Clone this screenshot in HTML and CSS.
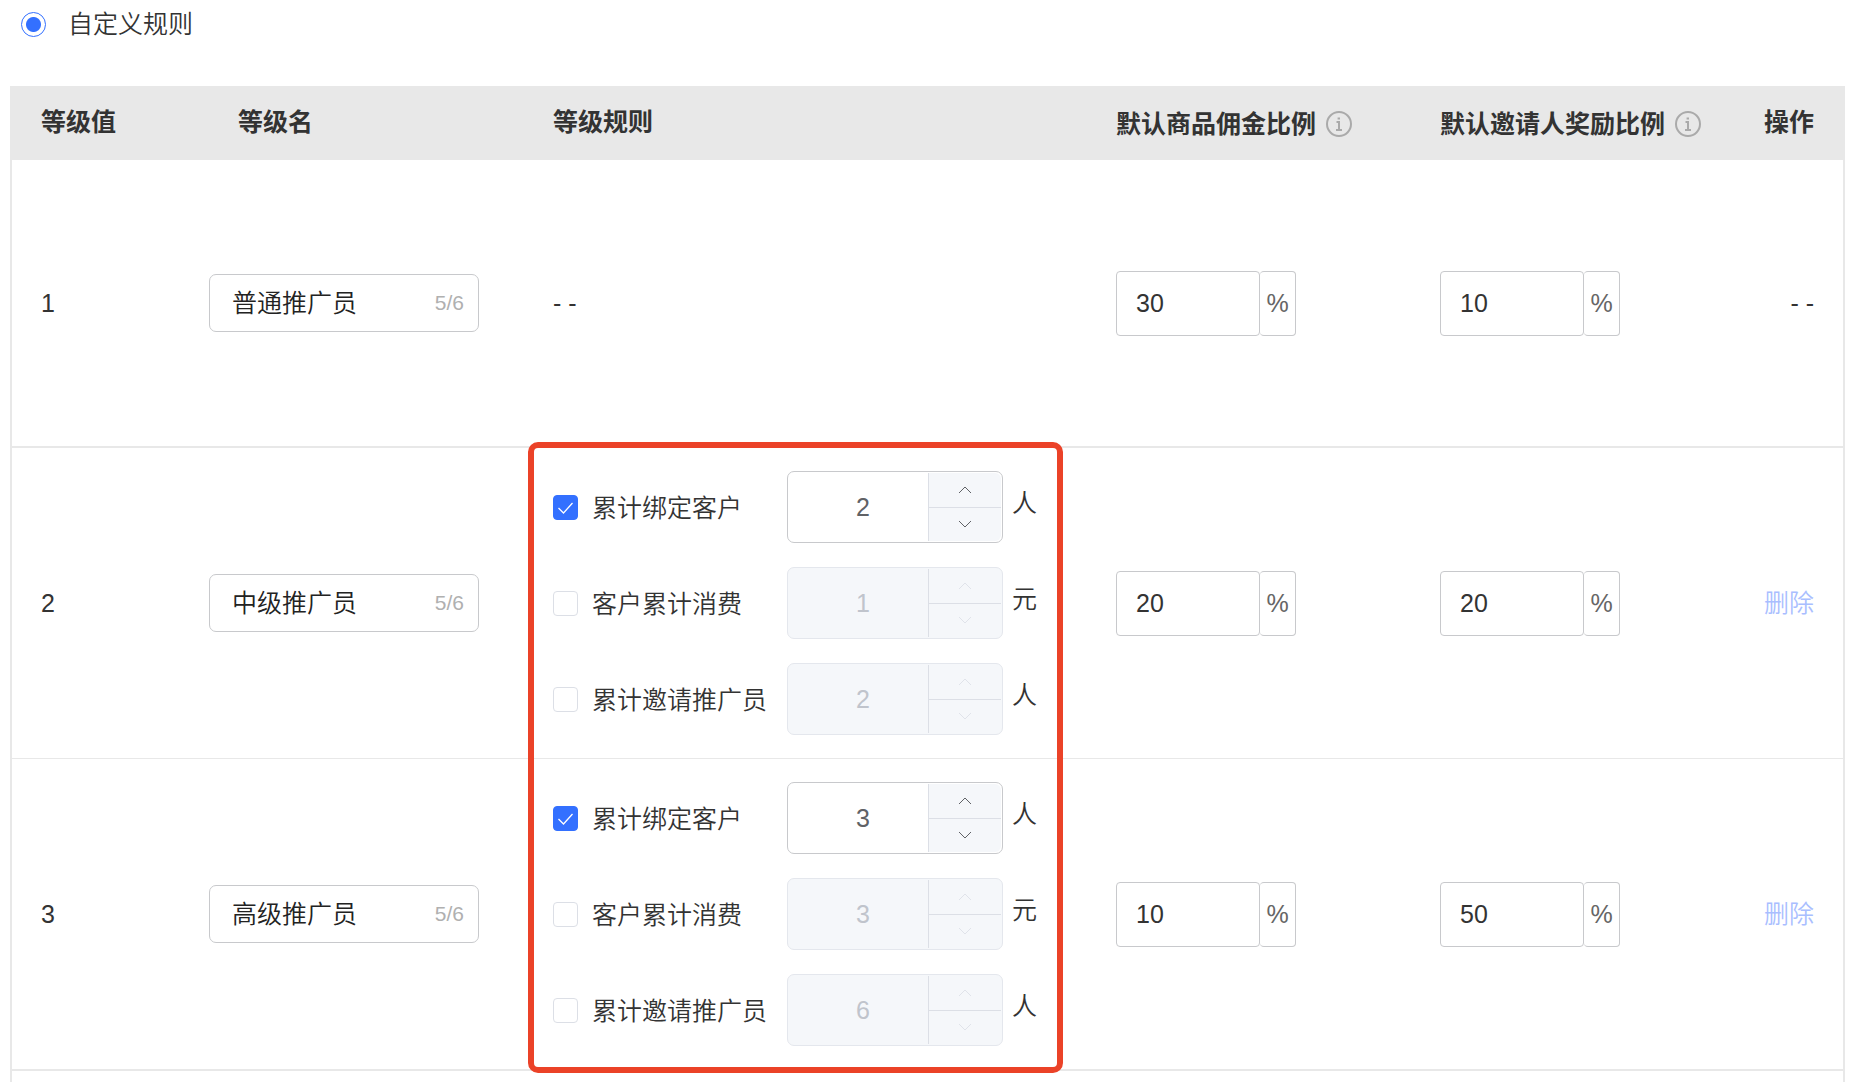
FILE: index.html
```html
<!DOCTYPE html>
<html lang="zh-CN">
<head>
<meta charset="utf-8">
<title>自定义规则</title>
<link rel="stylesheet" href="styles.css">
</head>
<body>
<svg class="sprite" aria-hidden="true">
  <symbol id="up" viewBox="0 0 14 8"><path d="M1 7 7 1l6 6"/></symbol>
  <symbol id="down" viewBox="0 0 14 8"><path d="m1 1 6 6 6-6"/></symbol>
  <symbol id="info" viewBox="0 0 26 26"><circle cx="13" cy="13" r="12"/><path d="M10.500 11h2.500v8M10 19h6"/><path d="M12.800 6.500v2" stroke-width="2.400"/></symbol>
</svg>
<label class="mode"><input class="radio" type="radio" name="mode" checked><span>自定义规则</span></label>

<main class="levels">
<table>
  <colgroup><col class="col-level"><col class="col-name"><col><col class="col-rate"><col class="col-rate"><col class="col-op"></colgroup>
  <thead>
    <tr>
      <th>等级值</th>
      <th>等级名</th>
      <th>等级规则</th>
      <th><span class="tip">默认商品佣金比例<svg class="info"><use href="#info"/></svg></span></th>
      <th><span class="tip">默认邀请人奖励比例<svg class="info"><use href="#info"/></svg></span></th>
      <th class="op">操作</th>
    </tr>
  </thead>
  <tbody>
    <tr class="base">
      <td>1</td>
      <td class="name-cell"><div class="name"><input type="text" aria-label="等级名" value="普通推广员" maxlength="6"><span>5/6</span></div></td>
      <td>- -</td>
      <td><div class="rate"><input type="text" aria-label="默认商品佣金比例" value="30"><span>%</span></div></td>
      <td><div class="rate"><input type="text" aria-label="默认邀请人奖励比例" value="10"><span>%</span></div></td>
      <td class="op">- -</td>
    </tr>
    <tr class="middle">
      <td>2</td>
      <td class="name-cell"><div class="name"><input type="text" aria-label="等级名" value="中级推广员" maxlength="6"><span>5/6</span></div></td>
      <td class="rule-cell">
        <div class="rules">
          <div class="rule">
            <label><input class="check" type="checkbox" checked>累计绑定客户</label>
            <div class="number"><input type="number" aria-label="累计绑定客户" value="2"><div class="steps"><button type="button" aria-label="增加"><svg><use href="#up"/></svg></button><button type="button" aria-label="减少"><svg><use href="#down"/></svg></button></div></div>
            <span class="unit">人</span>
          </div>
          <div class="rule">
            <label><input class="check" type="checkbox">客户累计消费</label>
            <div class="number off"><input type="number" aria-label="客户累计消费" value="1" disabled><div class="steps"><button type="button" aria-label="增加" disabled><svg><use href="#up"/></svg></button><button type="button" aria-label="减少" disabled><svg><use href="#down"/></svg></button></div></div>
            <span class="unit">元</span>
          </div>
          <div class="rule">
            <label><input class="check" type="checkbox">累计邀请推广员</label>
            <div class="number off"><input type="number" aria-label="累计邀请推广员" value="2" disabled><div class="steps"><button type="button" aria-label="增加" disabled><svg><use href="#up"/></svg></button><button type="button" aria-label="减少" disabled><svg><use href="#down"/></svg></button></div></div>
            <span class="unit">人</span>
          </div>
        </div>
        <div class="highlight"></div>
      </td>
      <td><div class="rate"><input type="text" aria-label="默认商品佣金比例" value="20"><span>%</span></div></td>
      <td><div class="rate"><input type="text" aria-label="默认邀请人奖励比例" value="20"><span>%</span></div></td>
      <td class="op"><a href="#">删除</a></td>
    </tr>
    <tr>
      <td>3</td>
      <td class="name-cell"><div class="name"><input type="text" aria-label="等级名" value="高级推广员" maxlength="6"><span>5/6</span></div></td>
      <td>
        <div class="rules">
          <div class="rule">
            <label><input class="check" type="checkbox" checked>累计绑定客户</label>
            <div class="number"><input type="number" aria-label="累计绑定客户" value="3"><div class="steps"><button type="button" aria-label="增加"><svg><use href="#up"/></svg></button><button type="button" aria-label="减少"><svg><use href="#down"/></svg></button></div></div>
            <span class="unit">人</span>
          </div>
          <div class="rule">
            <label><input class="check" type="checkbox">客户累计消费</label>
            <div class="number off"><input type="number" aria-label="客户累计消费" value="3" disabled><div class="steps"><button type="button" aria-label="增加" disabled><svg><use href="#up"/></svg></button><button type="button" aria-label="减少" disabled><svg><use href="#down"/></svg></button></div></div>
            <span class="unit">元</span>
          </div>
          <div class="rule">
            <label><input class="check" type="checkbox">累计邀请推广员</label>
            <div class="number off"><input type="number" aria-label="累计邀请推广员" value="6" disabled><div class="steps"><button type="button" aria-label="增加" disabled><svg><use href="#up"/></svg></button><button type="button" aria-label="减少" disabled><svg><use href="#down"/></svg></button></div></div>
            <span class="unit">人</span>
          </div>
        </div>
      </td>
      <td><div class="rate"><input type="text" aria-label="默认商品佣金比例" value="10"><span>%</span></div></td>
      <td><div class="rate"><input type="text" aria-label="默认邀请人奖励比例" value="50"><span>%</span></div></td>
      <td class="op"><a href="#">删除</a></td>
    </tr>
  </tbody>
</table>
</main>
</body>
</html>
```
FILE: styles.css
```css
* { box-sizing: border-box; }

body {
  display: flex;
  flex-direction: column;
  min-height: 100vh;
  margin: 0;
  padding: 6px 13px 0 10px;
  background: #fff;
  color: #333;
  font: 350 25px/36px "Liberation Sans", "Noto Sans CJK SC", sans-serif;
}

input, button { margin: 0; padding: 0; border: 0; background: none; color: inherit; font: inherit; outline: 0; }

.sprite { position: absolute; width: 0; height: 0; }

svg { fill: none; stroke: currentColor; }

.mode { display: flex; align-items: center; gap: 22px; padding-left: 11px; margin-bottom: 44px; }

.radio {
  appearance: none;
  width: 25px;
  height: 25px;
  border: 1px solid #3370ff;
  border-radius: 50%;
  background: radial-gradient(circle, #3370ff 7px, transparent 8px);
}

.levels { flex: 1; border: solid #e8e8e8; border-width: 0 2px; }

table { width: 100%; table-layout: fixed; border-spacing: 0; }

.col-level { width: 197px; }
.col-name { width: 315px; }
.col-rate { width: 324px; }
.col-op { width: 108px; }

thead { background: #e8e8e8; }

th { height: 74px; padding: 0 0 2px 29px; font-weight: 700; text-align: left; white-space: nowrap; }

th:has(.tip) { padding-top: 2px; padding-bottom: 0; }

.tip { display: flex; align-items: center; gap: 10px; }

.info { width: 26px; height: 26px; color: #aaa; stroke-width: 2; }

td { height: 312px; padding: 23px 0 23px 29px; border-bottom: 2px solid #e8e8e8; }

.base td { height: 288px; }

.middle td { height: 311px; border-bottom-width: 1px; }

td.name-cell { padding-left: 0; }

.rule-cell { position: relative; }

.op { padding-right: 29px; padding-left: 0; text-align: right; }

.op a { color: #a9beff; text-decoration: none; }

.name {
  display: flex;
  align-items: center;
  width: 270px;
  height: 58px;
  padding: 0 14px 0 22px;
  border: 1px solid #c8c9cc;
  border-radius: 7px;
}

.name input { flex: 1; min-width: 0; color: #222; }

.name span { color: #b0b0b0; font-size: 21px; }

.rate { display: flex; width: 180px; height: 65px; color: #666; }

.rate input { width: 144px; padding-left: 19px; border: 1px solid #c8c9cc; border-radius: 4px; color: #333; }

.rate span { display: flex; flex: 1; align-items: center; justify-content: center; border: 1px solid #c8c9cc; border-left: 0; border-radius: 4px; }

.rules { display: grid; gap: 24px; }

.rule { display: flex; align-items: center; height: 72px; }

.rule label { display: flex; align-items: center; gap: 14px; width: 234px; padding-top: 1px; white-space: nowrap; }

.check { appearance: none; width: 25px; height: 25px; border: 1px solid #dcdfe6; border-radius: 4px; }

.check:checked {
  border-color: #3370ff;
  background: #3370ff url("data:image/svg+xml,%3Csvg xmlns='http://www.w3.org/2000/svg' viewBox='0 0 23 23'%3E%3Cpath d='M4.500 12l5 5L18.500 7' fill='none' stroke='white' stroke-width='1.300'/%3E%3C/svg%3E") center / 23px no-repeat;
}

.number { display: flex; width: 216px; height: 72px; border: 1px solid #c8c9cc; border-radius: 7px; color: #606266; }

.number input { flex: 1; min-width: 0; padding-left: 10px; text-align: center; appearance: textfield; }

.number input::-webkit-inner-spin-button { appearance: none; }

.steps { display: flex; flex-direction: column; width: 73px; margin: 1px 1px 1px 0; border-left: 1px solid #dcdfe6; border-radius: 0 6px 6px 0; background: #f5f7fa; overflow: hidden; }

.steps button { display: flex; flex: 1; align-items: center; justify-content: center; }

.steps button:first-child { border-bottom: 1px solid #dcdfe6; }

.steps svg { width: 14px; height: 8px; }

.number.off { border-color: #e4e7ed; background: #f5f7fa; color: #c0c4cc; }

.off .steps svg { color: #e0e3ea; }

.unit { padding: 0 0 8px 9px; }

/* Frame round the rules of the two upper levels */
.highlight {
  position: absolute;
  top: -6px;
  right: 24px;
  left: 4px;
  height: calc(200% + 11px);
  border: 6px solid #eb4228;
  border-radius: 10px;
  pointer-events: none;
}
```
